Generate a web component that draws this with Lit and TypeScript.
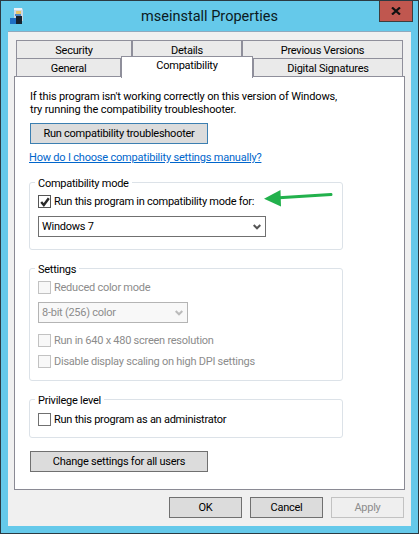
import { LitElement, html, css, svg } from "lit";
import { customElement } from "lit/decorators.js";

const chevron = (color: string) => html`<svg class="chev" width="8" height="6" viewBox="0 0 8 6"><path d="M0.7 1 L4 4.3 L7.3 1" fill="none" stroke=${color} stroke-width="2"/></svg>`;
const tick = svg`<path d="M2.2 6 L4.8 9 L9.8 2.2" fill="none" stroke="#2a2a2a" stroke-width="2.4"/>`;

@customElement("app-root")
export class AppRoot extends LitElement {
  static styles = css`
    :host { display: block; width: 419px; height: 534px; font-family: Roboto, "Liberation Sans", sans-serif; font-size: 11px; letter-spacing: -0.25px; color: #000; }
    * { box-sizing: border-box; }
    .win { width: 419px; height: 534px; background: #65c9ea; border: 1px solid #2b3a42; display: flex; flex-direction: column; padding: 0 7px 7px 7px; }
    .titlebar { height: 30px; display: flex; align-items: center; position: relative; flex: none; }
    .title { flex: 1; text-align: center; font-size: 14.5px; letter-spacing: 0; color: #0b1a22; }
    .appicon { position: absolute; left: 2px; top: 6px; }
    .close { position: absolute; right: -2px; top: 0; width: 34px; height: 21px; background: #c0574f; border: 1px solid #3d3d3d; border-top: none; display: flex; align-items: center; justify-content: center; }
    .inner { flex: 1; background: #f0f0f0; display: flex; flex-direction: column; padding: 8px 6px 0 6px; border-top: 1px solid #8fa9bd; }
    .tabs { flex: none; display: flex; flex-direction: column; padding: 0 2px; position: relative; z-index: 1; height: 36px; }
    .row { display: flex; height: 18px; flex: none; }
    .tab { background: #eaeaea; border: 1px solid #8f8f9b; display: flex; align-items: center; justify-content: center; height: 19px; flex: none; padding-top: 1px; }
    .tab.active { background: #fff; height: 22px; margin-top: -2px; border-bottom: none; align-items: flex-start; padding-top: 2px; position: relative; z-index: 1; }
    .t116 { width: 116px; } .t110 { width: 110px; } .t161 { width: 161px; }
    .t105 { width: 105px; } .t132 { width: 132px; } .t150 { width: 150px; }
    .panel { flex: none; height: 414px; background: #fff; border: 1px solid #8a8a94; display: flex; flex-direction: column; padding: 13px 15px 0 15px; }
    .intro { line-height: 13px; white-space: nowrap; letter-spacing: -0.15px; }
    .btn { background: #dcdcdc; border: 1px solid #707070; height: 21px; display: flex; align-items: center; justify-content: center; flex: none; white-space: nowrap; }
    .btn.wide { width: 178px; }
    .btn.primary { border-color: #3c7fb1; margin-top: 7px; }
    .btn.off { background: #efefef; border-color: #c2c2c2; color: #8c8c8c; }
    .link { color: #0066cc; text-decoration: underline; margin-top: 7px; line-height: 14px; margin-left: -1px; white-space: nowrap; letter-spacing: -0.2px; }
    .group { position: relative; width: 314px; border: 1px solid #dce2e8; border-radius: 3px; padding: 12px 8px 0 8px; flex: none; margin-left: -1px; display: flex; flex-direction: column; }
    .legend { position: absolute; left: 5px; top: -6px; background: #fff; padding: 0 3px; line-height: 14px; white-space: nowrap; }
    .g1 { margin-top: 17px; height: 68px; }
    .g2 { margin-top: 18px; height: 113px; }
    .g3 { margin-top: 18px; height: 39px; padding-top: 13px; }
    .check { display: flex; align-items: center; gap: 3px; height: 13px; white-space: nowrap; }
    .box { width: 13px; height: 13px; border: 1px solid #707070; background: #fff; flex: none; display: block; }
    .box.on { border-color: #555; }
    .check.off { color: #8c8c8c; }
    .check.off .box { border-color: #c2c2c2; background: #f8f8f8; }
    .select { display: flex; align-items: center; justify-content: space-between; height: 21px; border: 1px solid #707070; padding: 0 4px 0 3px; flex: none; white-space: nowrap; }
    .select.off { border-color: #b4b4b4; color: #8c8c8c; background: #f8f8f8; }
    .s1 { width: 228px; margin-top: 8px; }
    .s2 { width: 150px; margin-top: 8px; }
    .mt11 { margin-top: 11px; }
    .mt8 { margin-top: 8px; }
    .all { margin-top: 13px; }
    .footer { flex: none; display: flex; justify-content: flex-end; gap: 8px; padding-top: 7px; margin-right: 1px; }
    .footer .btn { width: 73px; }
    .arrow { position: absolute; left: 233px; top: 6px; }
  `;

  render() {
    return html`<div class="win">
      <div class="titlebar">
        <svg class="appicon" width="15" height="17" viewBox="0 0 15 17">
          <path d="M4 1 H12 L13 3 V14 H4 Z" fill="#cfd8e2"/>
          <path d="M4 1 H12 V3 H4 Z" fill="#eef2f6"/>
          <rect x="6" y="4" width="5" height="3" fill="#e6c66a"/>
          <rect x="5" y="7" width="6" height="2" fill="#4f86c6"/>
          <rect x="0" y="11" width="6" height="6" fill="#1f6fc4"/>
          <rect x="6" y="9" width="6" height="8" fill="#17222e"/>
        </svg>
        <div class="title">mseinstall Properties</div>
        <div class="close"><svg width="10" height="8" viewBox="0 0 10 8"><path d="M1 0.5 L9 7.5 M9 0.5 L1 7.5" stroke="#111" stroke-width="2.2"/></svg></div>
      </div>
      <div class="inner">
        <div class="tabs">
          <div class="row">
            <div class="tab t116">Security</div>
            <div class="tab t110">Details</div>
            <div class="tab t161">Previous Versions</div>
          </div>
          <div class="row">
            <div class="tab t105">General</div>
            <div class="tab active t132">Compatibility</div>
            <div class="tab t150">Digital Signatures</div>
          </div>
        </div>
        <div class="panel">
          <div class="intro">If this program isn't working correctly on this version of Windows,<br>try running the compatibility troubleshooter.</div>
          <div class="btn wide primary">Run compatibility troubleshooter</div>
          <div class="link">How do I choose compatibility settings manually?</div>
          <div class="group g1">
            <div class="legend">Compatibility mode</div>
            <div class="check"><svg class="box on" viewBox="0 0 11 11">${tick}</svg>Run this program in compatibility mode for:</div>
            <div class="select s1">Windows 7 ${chevron("#555")}</div>
            <svg class="arrow" width="70" height="18" viewBox="0 0 70 18"><path d="M1 9.7 L17.5 1 L18 17.5 Z" fill="#22b14c"/><path d="M16 8.7 L68 5.5" fill="none" stroke="#22b14c" stroke-width="3" stroke-linecap="round"/></svg>
          </div>
          <div class="group g2">
            <div class="legend">Settings</div>
            <div class="check off"><span class="box"></span>Reduced color mode</div>
            <div class="select off s2">8-bit (256) color ${chevron("#bbb")}</div>
            <div class="check off mt11"><span class="box"></span>Run in 640 x 480 screen resolution</div>
            <div class="check off mt8"><span class="box"></span>Disable display scaling on high DPI settings</div>
          </div>
          <div class="group g3">
            <div class="legend">Privilege level</div>
            <div class="check"><span class="box"></span>Run this program as an administrator</div>
          </div>
          <div class="btn wide all">Change settings for all users</div>
        </div>
        <div class="footer">
          <div class="btn">OK</div>
          <div class="btn">Cancel</div>
          <div class="btn off">Apply</div>
        </div>
      </div>
    </div>`;
  }
}
